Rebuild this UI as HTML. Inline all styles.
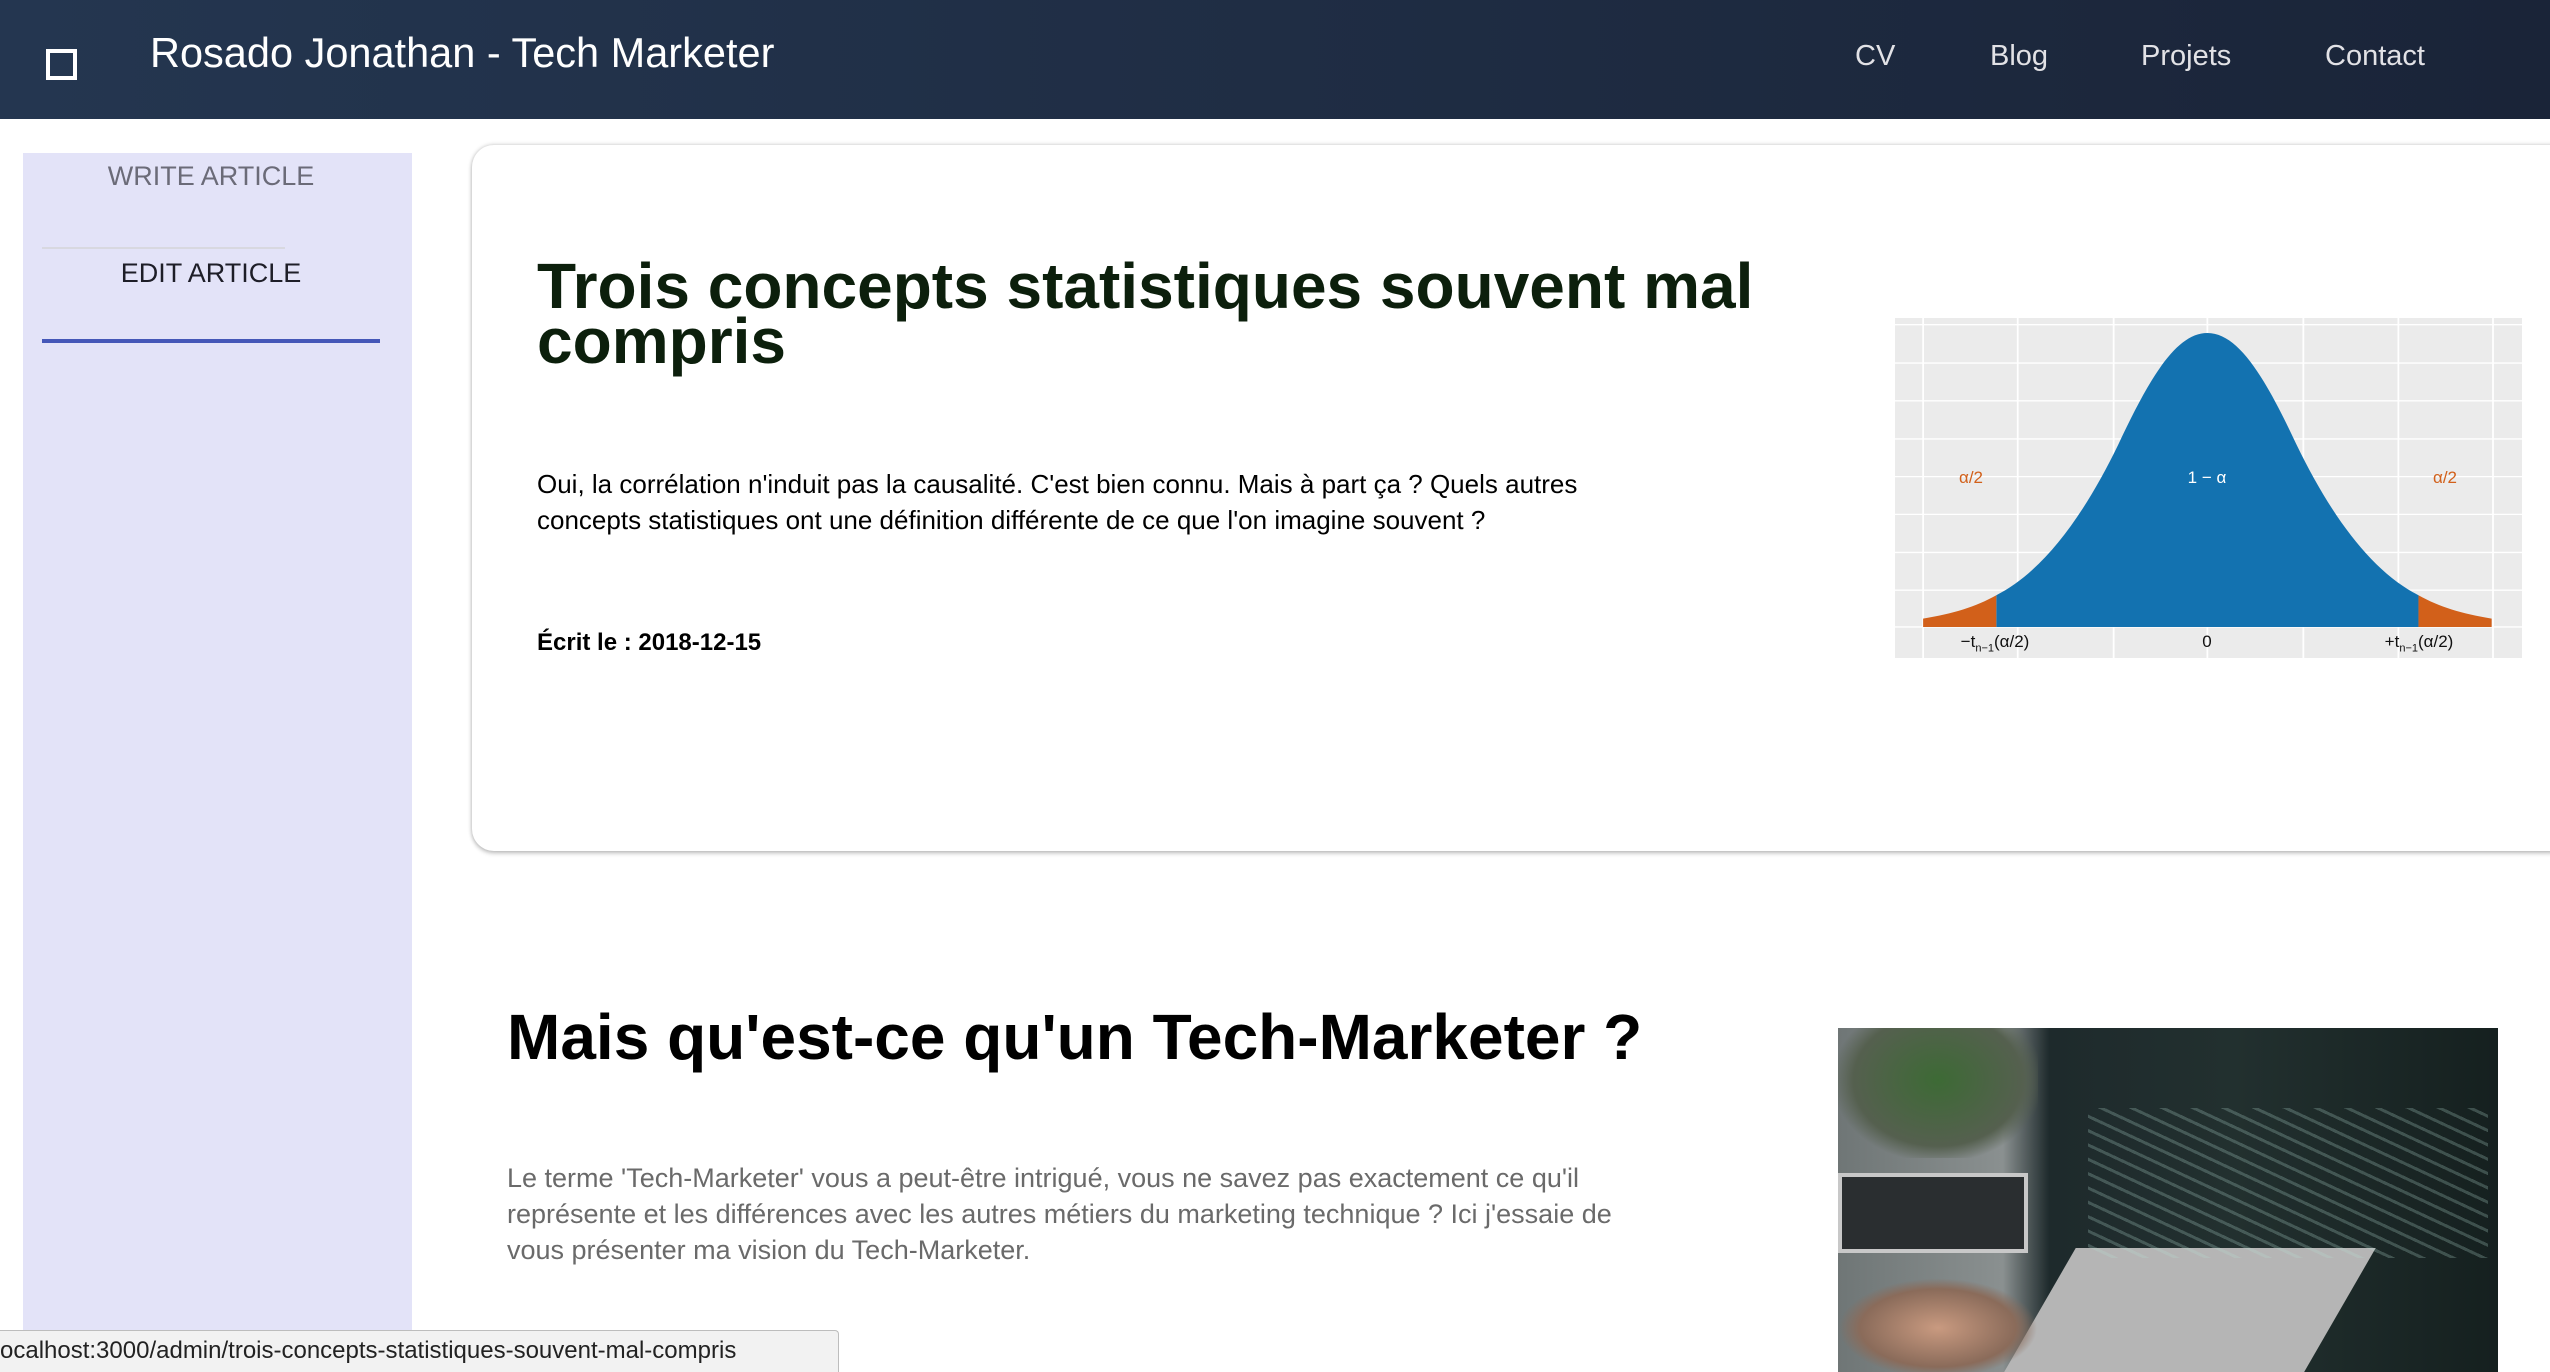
<!DOCTYPE html>
<html><head><meta charset="utf-8"><style>
*{margin:0;padding:0;box-sizing:border-box}
html,body{width:2550px;height:1372px;overflow:hidden}
body{background:#fff;font-family:"Liberation Sans",Arial,sans-serif;position:relative}
.nav{position:absolute;left:0;top:0;width:2550px;height:119px;background:linear-gradient(90deg,#243650,#1a2438)}
.abs{position:absolute;white-space:nowrap}
.navi{color:#e2e2e6;font-size:29px;top:40px}
.side{position:absolute;left:23px;top:153px;width:389px;height:1219px;background:#e3e3f8}
.card{position:absolute;left:472px;top:145px;width:2100px;height:706px;background:#fff;border-radius:22px;box-shadow:0 0 4px rgba(0,0,0,.25),0 3px 4px rgba(0,0,0,.15)}
.lbl{position:absolute;font-size:17px;transform:translateX(-50%);white-space:nowrap}
</style></head><body>
<div class="nav"></div>
<div class="abs" style="left:46px;top:49px;width:31px;height:31px;border:4px solid #fff"></div>
<div class="abs" style="left:150px;top:29px;color:#fff;font-size:41.5px">Rosado Jonathan - Tech Marketer</div>
<div class="abs navi" style="left:1855px">CV</div>
<div class="abs navi" style="left:1990px">Blog</div>
<div class="abs navi" style="left:2141px">Projets</div>
<div class="abs navi" style="left:2325px">Contact</div>

<div class="side"></div>
<div class="abs" style="left:11px;width:400px;text-align:center;top:161px;font-size:27px;color:#6b6b78">WRITE ARTICLE</div>
<div class="abs" style="left:42px;top:247px;width:243px;height:2px;background:#d8d8e0"></div>
<div class="abs" style="left:11px;width:400px;text-align:center;top:258px;font-size:27px;color:#1e1e28">EDIT ARTICLE</div>
<div class="abs" style="left:42px;top:339px;width:338px;height:4px;background:#4557b8"></div>

<div class="card"></div>
<div class="abs" style="left:537px;top:259px;font-size:64px;font-weight:bold;color:#0c1f0c;line-height:55px;white-space:normal;width:1300px">Trois concepts statistiques souvent mal compris</div>
<div class="abs" style="left:537px;top:466px;font-size:26px;color:#000;line-height:36px;white-space:normal;width:1140px">Oui, la corrélation n'induit pas la causalité. C'est bien connu. Mais à part ça ? Quels autres concepts statistiques ont une définition différente de ce que l'on imagine souvent ?</div>
<div class="abs" style="left:537px;top:629px;font-size:24px;font-weight:bold;color:#000">Écrit le : 2018-12-15</div>

<svg class="abs" style="left:1895px;top:318px" width="627" height="340" viewBox="0 0 1405 1018" preserveAspectRatio="none">
<rect width="1405" height="1018" fill="#ebebeb"/>
<g stroke="#fff" stroke-width="4">
<path d="M63 0V1018M275 0V1018M490 0V1018M700 0V1018M915 0V1018M1128 0V1018M1340 0V1018"/>
<path d="M0 20H1405M0 135H1405M0 248H1405M0 362H1405M0 475H1405M0 588H1405M0 702H1405M0 815H1405M0 925H1405"/>
</g>
<path fill="#1372b0" d="M227,925 L227,830 C330,760 420,600 500,380 C570,180 630,45 700,45 C770,45 830,180 900,380 C980,600 1070,760 1173,830 L1173,925 Z"/>
<path fill="#d2601a" d="M63,925 L63,900 C130,885 180,865 227,830 L227,925 Z"/>
<path fill="#d2601a" d="M1337,925 L1337,900 C1270,885 1220,865 1173,830 L1173,925 Z"/>
</svg>
<div class="lbl" style="left:1971px;top:468px;color:#d2601a">α/2</div>
<div class="lbl" style="left:2207px;top:468px;color:#fff">1 − α</div>
<div class="lbl" style="left:2445px;top:468px;color:#d2601a">α/2</div>
<div class="lbl" style="left:1995px;top:632px;color:#111">−t<sub style="font-size:11px">n−1</sub>(α/2)</div>
<div class="lbl" style="left:2207px;top:632px;color:#111">0</div>
<div class="lbl" style="left:2419px;top:632px;color:#111">+t<sub style="font-size:11px">n−1</sub>(α/2)</div>

<div class="abs" style="left:507px;top:1000px;font-size:64px;font-weight:bold;color:#000">Mais qu'est-ce qu'un Tech-Marketer ?</div>
<div class="abs" style="left:507px;top:1160px;font-size:27px;color:#6a6a6a;line-height:36px;white-space:normal;width:1160px">Le terme 'Tech-Marketer' vous a peut-être intrigué, vous ne savez pas exactement ce qu'il représente et les différences avec les autres métiers du marketing technique ? Ici j'essaie de vous présenter ma vision du Tech-Marketer.</div>

<div class="abs" style="left:1838px;top:1028px;width:660px;height:344px;overflow:hidden;background:linear-gradient(90deg,#6f7676 0%,#8a9090 25%,#1e2a2c 32%,#22302f 60%,#15201f 100%)">
<div class="abs" style="left:0;top:0;width:200px;height:130px;background:radial-gradient(ellipse at 50% 40%,#3d6a35,#55604f 60%,transparent 75%)"></div>
<div class="abs" style="left:0;top:145px;width:190px;height:80px;background:#2a2e30;border:4px solid #c8c8c8"></div>
<div class="abs" style="left:180px;top:220px;width:300px;height:200px;background:#b5b5b5;transform:skewX(-30deg)"></div>
<div class="abs" style="left:0;top:250px;width:200px;height:100px;background:radial-gradient(ellipse,#c99a80,#8a6b5a 55%,transparent 70%)"></div>
<div class="abs" style="left:250px;top:80px;width:400px;height:150px;background:repeating-linear-gradient(25deg,transparent 0 10px,rgba(180,220,210,.25) 10px 13px);"></div>
</div>

<div class="abs" style="left:-2px;top:1330px;width:841px;height:42px;background:#f2f2f2;border:1px solid #bdbdbd;border-bottom:none;border-radius:0 4px 0 0"></div>
<div class="abs" style="left:0;top:1337px;font-size:24px;color:#222">ocalhost:3000/admin/trois-concepts-statistiques-souvent-mal-compris</div>
</body></html>
